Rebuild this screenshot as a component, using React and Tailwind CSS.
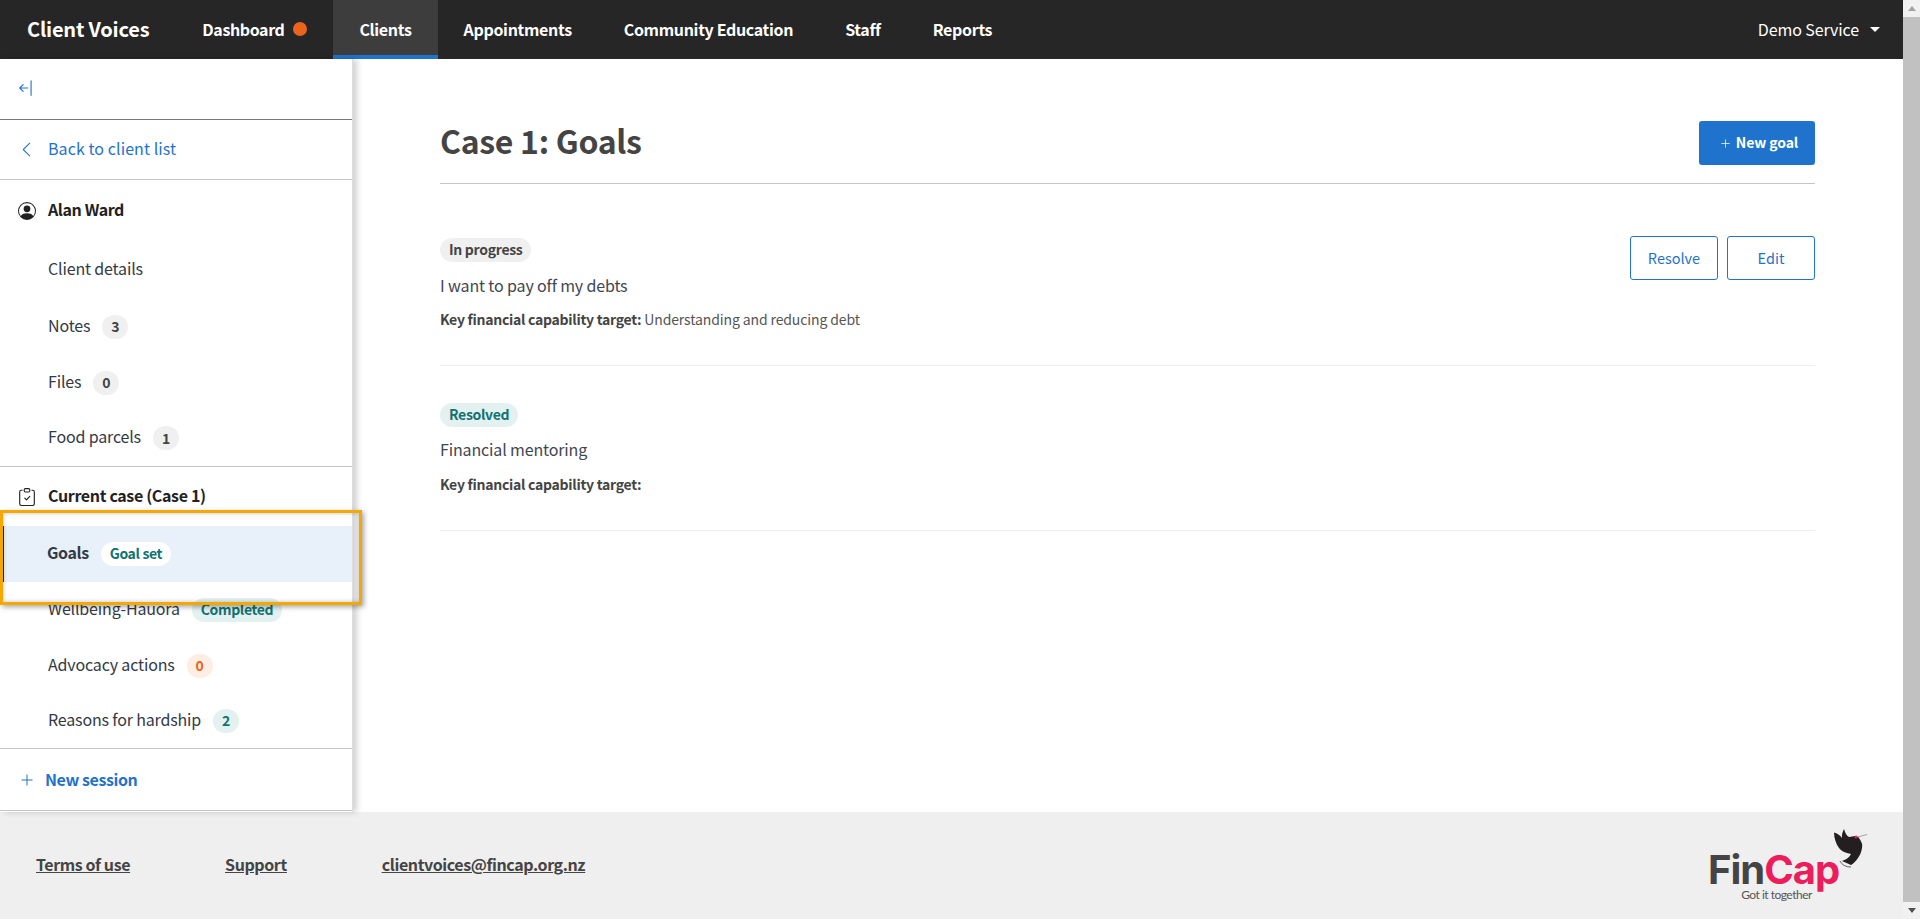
import React from 'react';
import { BsArrowBarLeft, BsChevronLeft, BsClipboardCheck, BsPersonCircle } from 'react-icons/bs';

const navItems = ['Clients', 'Appointments', 'Community Education', 'Staff', 'Reports'];

function PlusIcon({ size = 12, className = '' }) {
  return (
    <svg width={size} height={size} viewBox="0 0 12 12" className={className} stroke="currentColor" strokeWidth="1">
      <path d="M6 0.5V11.5M0.5 6H11.5" fill="none" />
    </svg>
  );
}

function Count({ children, tone = 'gray' }) {
  const tones = {
    gray: 'bg-[#f0f0f0] text-[#444444]',
    orange: 'bg-[#fdeee3] text-[#ea6420]',
    teal: 'bg-[#e3f1f0] text-[#127272]',
  };
  return (
    <span className={`ml-3 flex h-6 min-w-[26px] items-center justify-center rounded-full px-2 pb-[1px] text-[14px] font-semibold leading-[22px] ${tones[tone]}`}>
      {children}
    </span>
  );
}

function Pill({ children, className }) {
  return (
    <span className={`ml-3 flex h-6 items-center rounded-full px-[9px] pb-[2px] text-[14px] font-semibold leading-[20px] tracking-[-0.35px] ${className}`}>
      {children}
    </span>
  );
}

function SideRow({ label, height, badge, active }) {
  return (
    <div className={`flex items-center text-[16px] leading-6 text-[#333a45] ${height} ${active ? 'border-l-[4px] border-[#222222] bg-[#e8f0f9] pl-[43px] font-semibold tracking-[-0.4px]' : 'pl-[48px] tracking-[-0.16px]'}`}>
      <span className="-translate-y-[2px]">{label}</span>
      {badge}
    </div>
  );
}

function GoalBlock({ status, statusClass, title, target, height, top, titleGap, targetGap, actions }) {
  return (
    <div className={`flex justify-between border-b border-[#eeeeee] ${top} ${height}`}>
      <div>
        <span className={`block h-6 w-fit rounded-full px-[9px] text-[14px] font-semibold leading-[22px] tracking-[-0.3px] ${statusClass}`}>{status}</span>
        <p className={`text-[16px] leading-6 tracking-[-0.14px] text-[#3f4650] ${titleGap}`}>{title}</p>
        <p className={`text-[14px] leading-6 tracking-[-0.12px] text-[#555555] ${targetGap}`}>
          <span className="font-semibold tracking-[-0.27px] text-[#444444]">Key financial capability target:</span> {target}
        </p>
      </div>
      {actions}
    </div>
  );
}

export default function App() {
  return (
    <div className="flex h-[919px] w-full overflow-hidden bg-white font-['Noto_Sans_CJK_SC',sans-serif]">
      <div className="flex min-w-0 flex-1 flex-col">
        {/* Top nav */}
        <header className="flex h-[59px] shrink-0 items-stretch bg-[#262626] text-white">
          <div className="flex items-center pb-[2px] pl-[27px] pr-[27px] text-[20px] font-bold tracking-[-0.2px]">Client Voices</div>
          <div className="flex items-center px-[26px] pb-[1px] text-[16px] font-semibold tracking-[-0.4px]">
            Dashboard
            <span className="ml-[9px] h-[14px] w-[14px] rounded-full bg-[#ea6420]" />
          </div>
          {navItems.map((item, i) => (
            <div
              key={item}
              className={`flex items-center border-b-[4px] px-[26px] pt-[2px] text-[16px] font-semibold tracking-[-0.33px] ${i === 0 ? 'border-[#1f73cc] bg-[#3d3d3d]' : 'border-transparent'}`}
            >
              {item}
            </div>
          ))}
          <div className="ml-auto flex items-center pb-[2px] pr-[23px] text-[16px] tracking-[-0.1px]">
            Demo Service
            <span className="ml-[11px] mt-[2px] h-0 w-0 border-x-[5px] border-t-[5px] border-x-transparent border-t-white" />
          </div>
        </header>

        <div className="flex min-h-0 flex-1">
          {/* Sidebar */}
          <aside className="relative z-10 flex w-[353px] shrink-0 flex-col border-r border-[#dddddd] bg-white shadow-[4px_0_6px_rgba(0,0,0,0.18)]">
            <div className="flex h-[61px] items-center border-b border-[#777777] pb-[2px] pl-[17px] text-[#1f73cc]">
              <BsArrowBarLeft size={18} />
            </div>
            <div className="flex h-[60px] items-center gap-[13px] border-b border-[#c4c4c4] pl-[18px] text-[16px] tracking-[0.08px] text-[#1f73cc]">
              <BsChevronLeft size={17} />
              <span className="-translate-y-[2px]">Back to client list</span>
            </div>

            <div className="border-b border-[#c4c4c4]">
              <div className="flex h-[61px] items-center gap-[12px] pl-[18px] text-[16px] font-semibold tracking-[-0.4px] text-[#222222]">
                <BsPersonCircle size={18} />
                <span className="-translate-y-[2px]">Alan Ward</span>
              </div>
              <SideRow label="Client details" height="h-[57px]" />
              <SideRow label="Notes" height="h-[57px]" badge={<Count>3</Count>} />
              <SideRow label="Files" height="h-[55px]" badge={<Count>0</Count>} />
              <SideRow label="Food parcels" height="h-[56px]" badge={<Count>1</Count>} />
            </div>

            <div className="border-b border-[#c4c4c4]">
              <div className="flex h-[59px] items-center gap-[12px] pl-[18px] text-[16px] font-semibold tracking-[-0.35px] text-[#222222]">
                <BsClipboardCheck size={18} />
                <span className="-translate-y-[2px]">Current case (Case 1)</span>
              </div>
              <SideRow
                label="Goals"
                height="h-[56px]"
                active
                badge={<Pill className="bg-white text-[#127272]">Goal set</Pill>}
              />
              <SideRow
                label="Wellbeing-Hauora"
                height="h-[56px]"
                badge={<Pill className="bg-[#e3f1f0] text-[#127272]">Completed</Pill>}
              />
              <SideRow label="Advocacy actions" height="h-[55px]" badge={<Count tone="orange">0</Count>} />
              <SideRow label="Reasons for hardship" height="h-[55px]" badge={<Count tone="teal">2</Count>} />
            </div>

            <div className="flex h-[62px] items-center gap-[12px] border-b border-[#c4c4c4] pl-[21px] text-[16px] font-semibold tracking-[-0.4px] text-[#1f73cc]">
              <PlusIcon size={12} />
              <span className="-translate-y-[1px]">New session</span>
            </div>

            {/* Orange callout over the Goals row */}
            <div className="pointer-events-none absolute left-0 top-[451px] h-[95px] w-[362px] border-[3px] border-[#f5a800] shadow-[2px_2px_5px_rgba(0,0,0,0.35),inset_0_0_4px_rgba(0,0,0,0.25)]" />
          </aside>

          {/* Main */}
          <main className="min-w-0 flex-1 pl-[87px] pr-[88px]">
            <div className="flex h-[125px] items-end justify-between border-b border-[#c4c4c4] pb-[18px]">
              <h1 className="mb-[3px] text-[32px] font-bold leading-[44px] tracking-[-0.3px] text-[#444444]">Case 1: Goals</h1>
              <button className="flex h-[44px] w-[116px] items-center justify-center gap-[6px] rounded-[3px] bg-[#1f73cc] pl-[5px] text-[14px] font-semibold tracking-[-0.1px] text-white">
                <PlusIcon size={9} className="mt-[1px]" />
                <span className="-translate-y-[1px]">New goal</span>
              </button>
            </div>
            <GoalBlock
              status="In progress"
              statusClass="bg-[#f0f0f0] text-[#444444]"
              title="I want to pay off my debts"
              target="Understanding and reducing debt"
              top="pt-[54px]"
              height="h-[182px]"
              titleGap="mt-[11px]"
              targetGap="mt-[10px]"
              actions={
                <div className="-mt-[2px] flex gap-[9px]">
                  <button className="h-[44px] w-[88px] rounded-[3px] border border-[#1f73cc] pb-[1px] text-[14.5px] text-[#1f73cc]">Resolve</button>
                  <button className="h-[44px] w-[88px] rounded-[3px] border border-[#1f73cc] pb-[1px] text-[14.5px] text-[#1f73cc]">Edit</button>
                </div>
              }
            />
            <GoalBlock
              status="Resolved"
              statusClass="bg-[#e3f1f0] text-[#127272]"
              title="Financial mentoring"
              target=""
              top="pt-[37px]"
              height="h-[165px]"
              titleGap="mt-[10px]"
              targetGap="mt-[11px]"
            />
          </main>
        </div>

        {/* Footer */}
        <footer className="flex h-[107px] shrink-0 items-start justify-between bg-[#efefef] pl-[36px] pr-[65px]">
          <div className="mt-[40px] flex gap-[95px] text-[16px] font-semibold tracking-[-0.4px] text-[#444444] underline">
            <a>Terms of use</a>
            <a>Support</a>
            <a>clientvoices@fincap.org.nz</a>
          </div>
          <div className="relative mt-[40px] w-[130px] text-center">
            <svg viewBox="0 0 36 40" className="absolute -right-[31px] -top-[23px] h-[40px] w-[36px]">
              <path d="M1 3.5 C4 4.5 7 6 9 9 C8.5 6 9.5 3 11 0 C12 4 14 7 16 8 C18 8 20 7 22 7 C24 7 25.5 8 26 9 C28 12 30 15 29 19 C28.5 23 27 26 25 29 C23 32 20 35 18 36 L9 32 C12 31 16 29 18 25 C12 24 8 22 6 19 C3 15 1 9 1 3.5 Z" fill="#231f20" />
              <path d="M7 32 C9 36 13 38 18 38" fill="none" stroke="#231f20" strokeWidth="0.7" />
              <path d="M25 8 L34 5.5" fill="none" stroke="#555555" strokeWidth="0.5" />
              <circle cx="23" cy="8" r="1.5" fill="#ed1c5b" />
            </svg>
            <div className="font-['Inter',sans-serif] text-[40px] font-bold leading-[36px] tracking-[-1px]">
              <span className="text-[#444444]">Fin</span>
              <span className="text-[#ed1c5b]">Cap</span>
            </div>
            <div className="ml-[7px] font-['Lato',sans-serif] text-[12px] leading-[13px] tracking-[-0.5px] text-[#555555]">Got it together</div>
          </div>
        </footer>
      </div>

      {/* Scrollbar */}
      <div className="flex w-[17px] shrink-0 flex-col items-center bg-[#f1f1f1]">
        <div className="flex h-[17px] items-center justify-center">
          <span className="h-0 w-0 border-x-[4px] border-b-[5px] border-x-transparent border-b-[#a3a3a3]" />
        </div>
        <div className="w-full flex-1 bg-[#c1c1c1]" />
        <div className="flex h-[17px] items-center justify-center">
          <span className="h-0 w-0 border-x-[4px] border-t-[5px] border-x-transparent border-t-[#505050]" />
        </div>
      </div>
    </div>
  );
}
